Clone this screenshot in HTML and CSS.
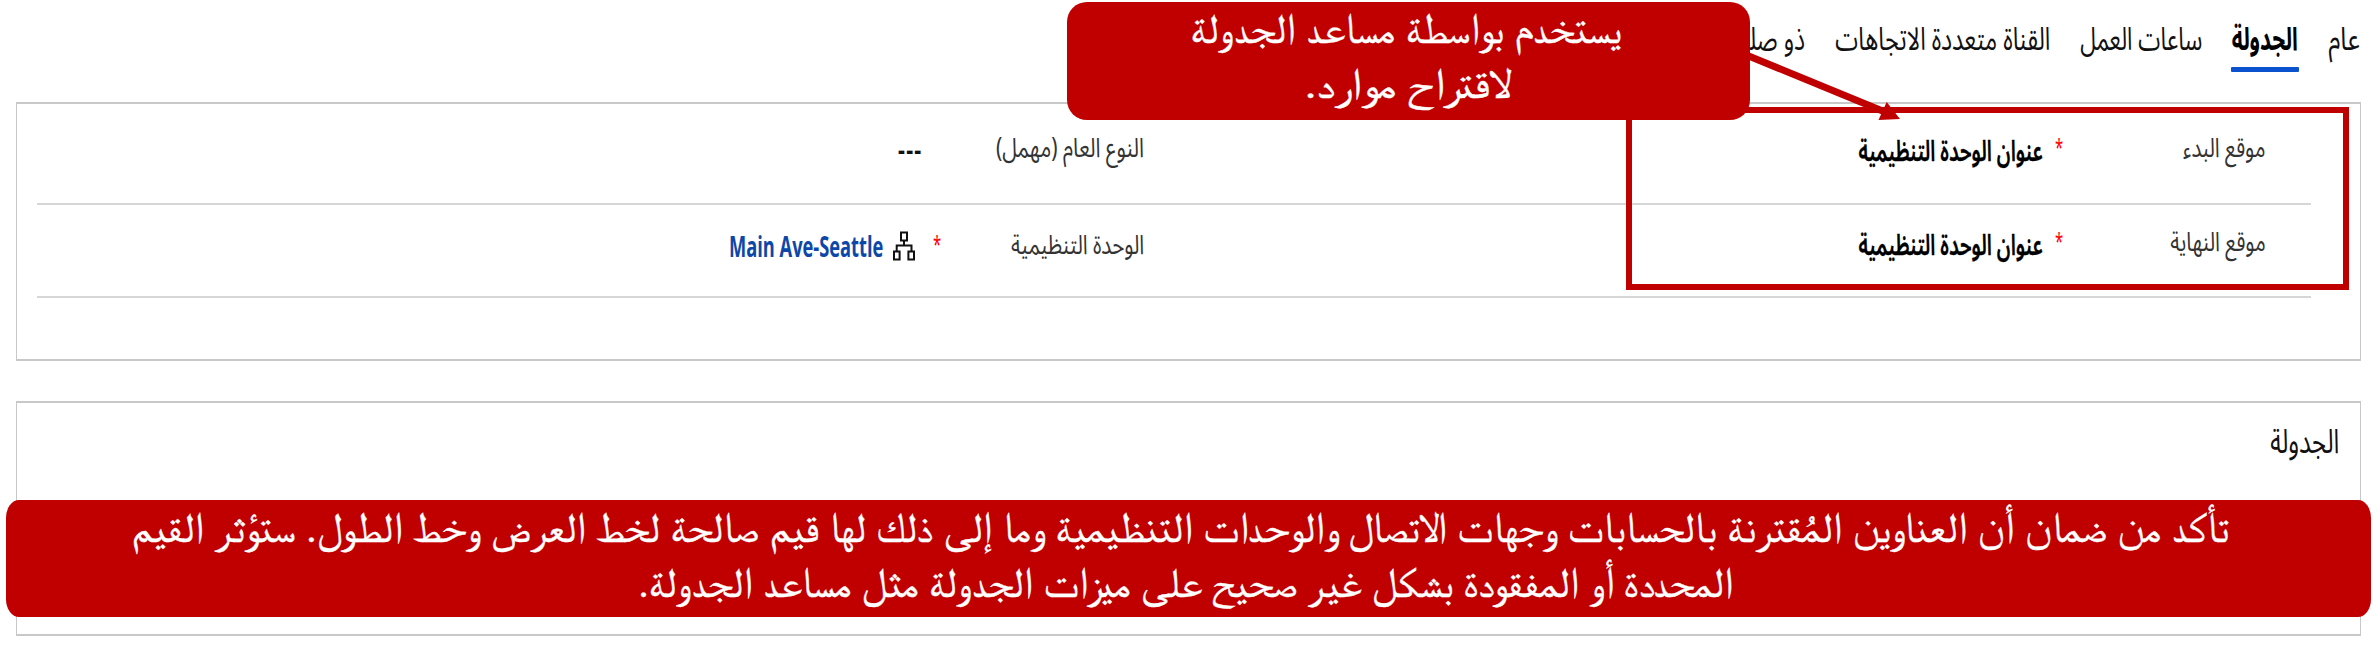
FILE: index.html
```html
<!DOCTYPE html>
<html lang="ar" dir="rtl">
<head>
<meta charset="utf-8">
<title>الجدولة</title>
<link rel="stylesheet" href="styles.css">
</head>
<body>
<nav class="tabs">
  <a class="tab tab-general"><span>عام</span></a>
  <a class="tab tab-scheduling active"><span>الجدولة</span></a>
  <a class="tab tab-hours"><span>ساعات العمل</span></a>
  <a class="tab tab-channel"><span>القناة متعددة الاتجاهات</span></a>
  <a class="tab tab-related"><span>ذو صلة</span></a>
</nav>

<main>
  <section class="panel panel-details">
    <div class="row row-first">
      <div class="label"><span>موقع البدء</span></div>
      <div class="star"><span>*</span></div>
      <div class="value"><span>عنوان الوحدة التنظيمية</span></div>
      <div class="label label-type"><span>النوع العام (مهمل)</span></div>
      <div class="star"></div>
      <div class="empty"><span>---</span></div>
    </div>
    <div class="row row-second">
      <div class="label"><span>موقع النهاية</span></div>
      <div class="star"><span>*</span></div>
      <div class="value"><span>عنوان الوحدة التنظيمية</span></div>
      <div class="label label-unit"><span>الوحدة التنظيمية</span></div>
      <div class="star star-unit"><span>*</span></div>
      <div class="lookup">
        <svg class="org" viewBox="0 0 22 30" width="22" height="30" fill="none" stroke="#111" stroke-width="2">
          <rect x="8" y="1.5" width="6" height="8"/>
          <path d="M11 9.5v5M3.7 20.5v-6h14.8v6"/>
          <rect x="1" y="20.5" width="5.6" height="8"/>
          <rect x="15.4" y="20.5" width="5.6" height="8"/>
        </svg>
        <a class="link" dir="ltr"><span>Main Ave-Seattle</span></a>
      </div>
    </div>
  </section>

  <section class="panel panel-scheduling">
    <h2 class="title"><span>الجدولة</span></h2>
  </section>
</main>

<div class="highlight"></div>
<div class="callout">
  <p class="line c1"><span>يستخدم بواسطة مساعد الجدولة</span></p>
  <p class="line c2"><span>لاقتراح موارد.</span></p>
</div>
<svg class="arrow" viewBox="0 0 160 75" width="160" height="75">
  <path d="M5 7.5L145 65" stroke="#c00000" stroke-width="7"/>
  <path d="M146.7 55L160 72L138.5 73Z" fill="#c00000"/>
</svg>
<div class="banner">
  <p class="line b1"><span>تأكد من ضمان أن العناوين المُقترنة بالحسابات وجهات الاتصال والوحدات التنظيمية وما إلى ذلك لها قيم صالحة لخط العرض وخط الطول. ستؤثر القيم</span></p>
  <p class="line b2"><span>المحددة أو المفقودة بشكل غير صحيح على ميزات الجدولة مثل مساعد الجدولة.</span></p>
</div>
</body>
</html>
```
FILE: styles.css
```css
* { box-sizing: border-box; }
html, body { margin: 0; }
body {
  position: relative;
  width: 2377px;
  height: 659px;
  overflow: hidden;
  background: #fff;
  color: #111;
  font-family: "Noto Sans Arabic", "Noto Sans", "DejaVu Sans", sans-serif;
}
span { display: inline-block; white-space: nowrap; transform-origin: right center; }

/* Tabs */
.tabs { display: flex; gap: 30px; height: 102px; padding: 8px 17px 0 0; }
.tab { position: relative; height: 64px; line-height: 64px; font-size: 32px; }
.tab-general { width: 32px; }
.tab-general span { transform: scaleX(.77); }
.tab-scheduling { width: 66px; }
.tab-scheduling span { transform: scaleX(.655); }
.tab-hours { width: 122px; }
.tab-hours span { transform: scaleX(.7); }
.tab-channel { width: 215px; }
.tab-channel span { transform: scaleX(.723); }
.tab-related { width: 66px; }
.tab-related span { transform: scaleX(.72); }
.active { font-weight: 700; color: #000; }
.active::after {
  content: "";
  position: absolute;
  top: 59px;
  right: -1px;
  width: 68px;
  height: 5px;
  background: #0b53ce;
  border-radius: 1px;
}

/* Panels */
.panel {
  margin: 0 16px;
  border: solid #c8c8c8;
  border-width: 2px 1px;
}
.panel-details { height: 259px; padding: 0 49px 0 20px; }
.panel-scheduling { height: 235px; margin-top: 40px; padding: 0 21px 0 0; }
.row {
  display: grid;
  grid-template-columns: 203px 20px 899px 203px 19px 1fr;
  align-items: start;
  padding-right: 45px;
  border-bottom: 2px solid #d6d6d6;
}
.row-first { height: 101px; }
.row-second { height: 93px; }
.label { font-size: 27px; color: #333; }
.label span { transform: scaleX(.76); }
.row-first .label { line-height: 90px; }
.row-first .label-type span { transform: scaleX(.775); }
.row-second .label { line-height: 75px; }
.row-second .label-unit { line-height: 82px; }
.value { font-size: 29px; font-weight: 600; color: #000; -webkit-text-stroke: .3px #000; }
.value span { transform: scaleX(.666); }
.row-first .value { line-height: 96px; }
.row-second .value { line-height: 82px; }
.star { font-family: "Noto Sans", sans-serif; font-size: 24px; color: #f00; }
.star span { transform: scaleX(.62); }
.row-first .star { line-height: 85px; }
.row-second .star { line-height: 71px; }
.row-second .star-unit { line-height: 77px; }
.empty { font: 700 26px/92px "Noto Sans", sans-serif; color: #111; letter-spacing: 1.5px; }
.empty span { transform: scaleX(.83); }
.lookup { display: flex; gap: 10px; padding-right: 7px; }
.org { margin-top: 26px; }
.link {
  width: 154px;
  font: 700 28px/82px "Open Sans", "Noto Sans", sans-serif;
  color: #0d47a8;
}
.link span { transform-origin: left center; transform: scaleX(.652); }
.title { margin: 0; padding-top: 1px; font-size: 34px; font-weight: 400; line-height: 76px; }
.title span { transform: scaleX(.71); }

/* Annotations laid over the form */
.highlight {
  position: absolute;
  left: 1626px;
  top: 107px;
  width: 723px;
  height: 183px;
  border: 6px solid #c00000;
}
.callout, .banner { position: absolute; background: #c00000; color: #fff; }
.callout {
  left: 1067px;
  top: 2px;
  width: 683px;
  height: 118px;
  padding-top: 1px;
  border-radius: 20px;
}
.arrow { position: absolute; left: 1740px; top: 47px; }
.banner {
  left: 6px;
  top: 500px;
  width: 2365px;
  height: 117px;
  padding-top: 2px;
  border-radius: 13px / 18px;
}
.line {
  margin: 0;
  height: 55px;
  font: 42px/55px "FreeSerif", "DejaVu Sans", serif;
  font-variant-ligatures: no-common-ligatures;
  -webkit-text-stroke: .4px #fff;
}
.c1 { padding-right: 129px; }
.c1 span { transform: scaleX(1.02); }
.c2 { padding-right: 240px; }
.c2 span { transform: scaleX(1.155); }
.b1 { padding-right: 142px; }
.b1 span { transform: scaleX(1.025); }
.b2 { padding-right: 638px; }
.b2 span { transform: scaleX(1.01); }
```
